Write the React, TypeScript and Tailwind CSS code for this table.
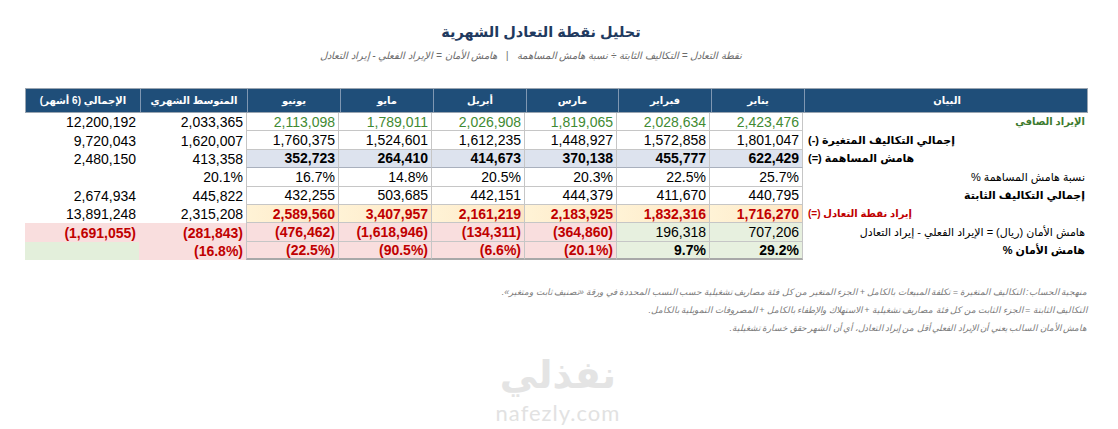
import React from 'react';

const FONT = '"Liberation Sans", "DejaVu Sans", sans-serif';

// physical order, left to right
const HEADERS = [
  'الإجمالي (6 أشهر)',
  'المتوسط الشهري',
  'يونيو',
  'مايو',
  'أبريل',
  'مارس',
  'فبراير',
  'يناير',
  'البيان',
];

type Row = {
  label: string;
  labelCls: string;
  labelLeft?: boolean;
  values: string[];
  kind: 'revenue' | 'plain' | 'contrib' | 'be' | 'safety' | 'safetyPct';
};

const ROWS: Row[] = [
  {
    label: 'الإيراد الصافي',
    labelCls: 'font-bold text-[#3d7a2e] text-[10px]',
    values: ['12,200,192', '2,033,365', '2,113,098', '1,789,011', '2,026,908', '1,819,065', '2,028,634', '2,423,476'],
    kind: 'revenue',
  },
  {
    label: 'إجمالي التكاليف المتغيرة (-)',
    labelCls: 'font-bold text-black text-[11px]',
    labelLeft: true,
    values: ['9,720,043', '1,620,007', '1,760,375', '1,524,601', '1,612,235', '1,448,927', '1,572,858', '1,801,047'],
    kind: 'plain',
  },
  {
    label: 'هامش المساهمة (=)',
    labelCls: 'font-bold text-black text-[11px]',
    labelLeft: true,
    values: ['2,480,150', '413,358', '352,723', '264,410', '414,673', '370,138', '455,777', '622,429'],
    kind: 'contrib',
  },
  {
    label: 'نسبة هامش المساهمة %',
    labelCls: 'text-black text-[11px]',
    values: ['', '20.1%', '16.7%', '14.8%', '20.5%', '20.3%', '22.5%', '25.7%'],
    kind: 'plain',
  },
  {
    label: 'إجمالي التكاليف الثابتة',
    labelCls: 'font-bold text-black text-[11px]',
    values: ['2,674,934', '445,822', '432,255', '503,685', '442,151', '444,379', '411,670', '440,795'],
    kind: 'plain',
  },
  {
    label: 'إيراد نقطة التعادل (=)',
    labelCls: 'font-bold text-[#c00000] text-[10px]',
    labelLeft: true,
    values: ['13,891,248', '2,315,208', '2,589,560', '3,407,957', '2,161,219', '2,183,925', '1,832,316', '1,716,270'],
    kind: 'be',
  },
  {
    label: 'هامش الأمان (ريال) = الإيراد الفعلي - إيراد التعادل',
    labelCls: 'text-black text-[11px]',
    values: ['(1,691,055)', '(281,843)', '(476,462)', '(1,618,946)', '(134,311)', '(364,860)', '196,318', '707,206'],
    kind: 'safety',
  },
  {
    label: 'هامش الأمان %',
    labelCls: 'font-bold text-black text-[11px]',
    values: ['', '(16.8%)', '(22.5%)', '(90.5%)', '(6.6%)', '(20.1%)', '9.7%', '29.2%'],
    kind: 'safetyPct',
  },
];

const NOTES = [
  'منهجية الحساب: التكاليف المتغيرة = تكلفة المبيعات بالكامل + الجزء المتغير من كل فئة مصاريف تشغيلية حسب النسب المحددة في ورقة «تصنيف ثابت ومتغير».',
  'التكاليف الثابتة = الجزء الثابت من كل فئة مصاريف تشغيلية + الاستهلاك والإطفاء بالكامل + المصروفات التمويلية بالكامل.',
  'هامش الأمان السالب يعني أن الإيراد الفعلي أقل من إيراد التعادل، أي أن الشهر حقق خسارة تشغيلية.',
];

function cellStyle(row: Row, col: number, value: string) {
  const isMonth = col >= 2;
  const neg = value.startsWith('(');
  const border = isMonth ? 'border-r border-b border-[#c6c6c6]' : '';
  const firstMonth = col === 2 ? 'border-l border-l-[#c6c6c6]' : '';
  let cls = '';
  switch (row.kind) {
    case 'revenue':
      cls = isMonth ? 'text-[#3f8a33]' : 'text-black';
      break;
    case 'plain':
      cls = 'text-black';
      break;
    case 'contrib':
      cls = isMonth
        ? 'bg-[#dde3ee] font-bold text-black border-b-[#a9b0bd]'
        : 'text-black';
      break;
    case 'be':
      cls = isMonth
        ? 'bg-gradient-to-l from-[#fde6c4] to-[#fff3d6] font-bold text-[#c00000]'
        : 'text-black';
      break;
    case 'safety':
      cls = neg
        ? 'bg-[#f9dede] font-bold text-[#c00000]'
        : 'bg-[#e7f0df] text-black';
      break;
    case 'safetyPct':
      if (col === 0) cls = 'bg-[#e3efdb]';
      else cls = neg ? 'bg-[#f9dede] font-bold text-[#c00000]' : 'bg-[#e7f0df] font-bold text-black';
      if (isMonth) cls += ' border-b-[#a8a8a8] border-b-2';
      break;
  }
  return `${border} ${firstMonth} ${cls}`;
}

export default function App() {
  return (
    <div
      className="w-[1118px] h-[429px] overflow-hidden bg-white flex flex-col"
      style={{ fontFamily: FONT }}
    >
      <div
        dir="rtl"
        className="mt-[22px] h-[20px] leading-[20px] text-center pr-[36px] text-[14.5px] font-bold text-[#1f3a5f]"
      >
        تحليل نقطة التعادل الشهرية
      </div>
      <div
        dir="rtl"
        className="mt-[7px] h-[14px] leading-[14px] text-center pr-[56px] text-[10px] italic text-[#6b6b6b] whitespace-pre"
      >
        {'نقطة التعادل = التكاليف الثابتة ÷ نسبة هامش المساهمة   |   هامش الأمان = الإيراد الفعلي - إيراد التعادل'}
      </div>

      <div className="ml-[25px] mt-[25px] w-[1063px]">
        <div className="grid grid-cols-[114px_107px_93px_93px_93px_92px_93px_93px_285px] h-[25px] bg-[#1f4e79] border border-[#9aa5b1]">
          {HEADERS.map((h, i) => (
            <div
              key={i}
              dir="rtl"
              className={`flex items-center justify-center text-white font-bold text-[10px] ${
                i > 0 ? 'border-l border-[#7f97b2]' : ''
              }`}
            >
              {h}
            </div>
          ))}
        </div>
        {ROWS.map((row, r) => (
          <div
            key={r}
            className="grid grid-cols-[114px_107px_93px_93px_93px_92px_93px_93px_285px] h-[18.4px]"
          >
            {row.values.map((v, c) => (
              <div
                key={c}
                className={`flex items-center justify-end pr-[3px] text-[14px] leading-none ${cellStyle(row, c, v)}`}
              >
                {v}
              </div>
            ))}
            <div
              dir="rtl"
              className={`flex items-center whitespace-nowrap leading-none ${
                row.labelLeft ? 'justify-end pl-[5px]' : 'justify-start pr-[3px]'
              } ${row.labelCls}`}
            >
              {row.label}
            </div>
          </div>
        ))}
      </div>

      <div dir="rtl" className="mt-[23px] pr-[31px] text-[8.8px] italic text-[#7a7a7a] leading-[18px]">
        {NOTES.map((n, i) => (
          <div key={i} className="whitespace-nowrap">
            {n}
          </div>
        ))}
      </div>

      <div className="mt-[20px] flex flex-col items-center pr-[2px] select-none">
        <div
          dir="rtl"
          className="text-[38px] font-bold leading-[36px] text-[#e4e4e4] tracking-[3px]"
          style={{ fontFamily: '"DejaVu Sans", sans-serif' }}
        >
          نفذلي
        </div>
        <div
          className="mt-[10px] text-[22px] leading-[20px] text-[#e2e2e2] tracking-[1px]"
          style={{ fontFamily: 'Lato, "Open Sans", sans-serif' }}
        >
          nafezly.com
        </div>
      </div>
    </div>
  );
}
